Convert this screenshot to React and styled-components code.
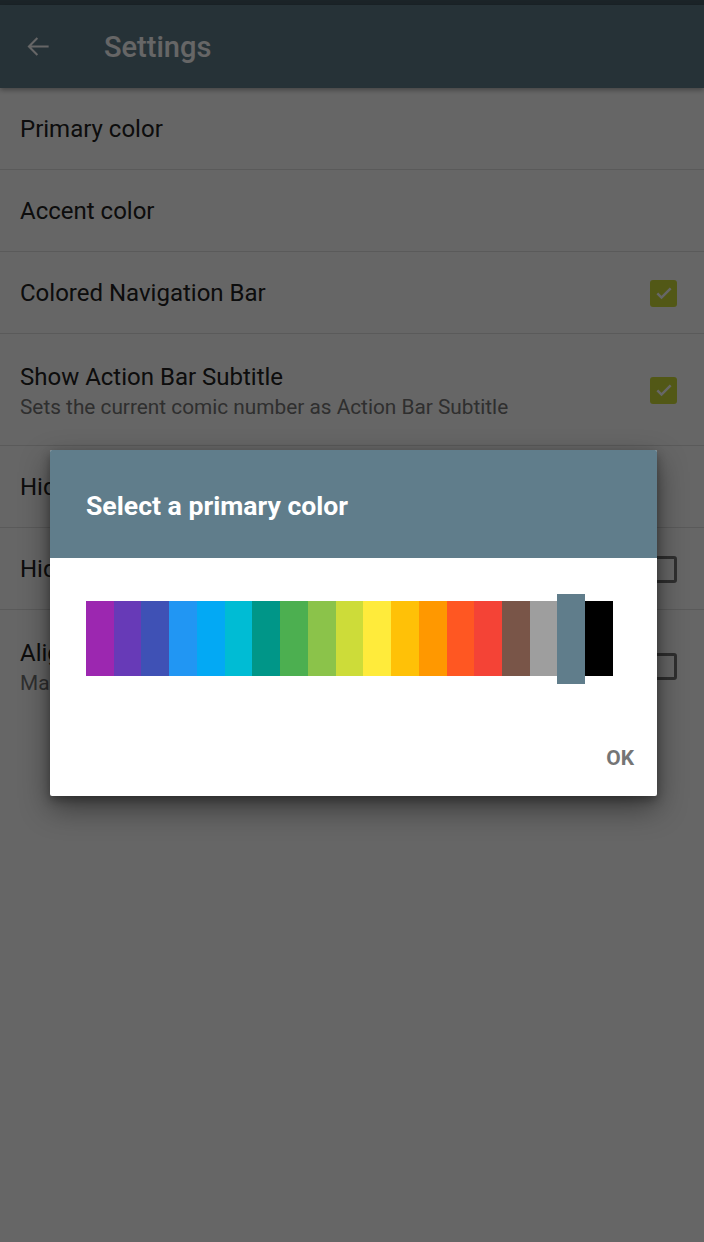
import React from 'react';
import styled, { createGlobalStyle } from 'styled-components';

const GlobalStyle = createGlobalStyle`
  html, body {
    margin: 0;
    padding: 0;
    background: #fff;
  }
  body {
    font-family: Roboto, "Noto Sans", "Liberation Sans", sans-serif;
  }
`;

const Screen = styled.div`
  background: #fff;
  height: 1242px;
  overflow: hidden;
  position: relative;
  width: 704px;
`;

const StatusBar = styled.div`
  background: #455a64;
  height: 5px;
`;

const AppBar = styled.header`
  align-items: center;
  background: #607d8b;
  box-shadow: 0 2px 5px rgba(0, 0, 0, 0.35);
  display: flex;
  height: 83px;
  padding-left: 25px;
  position: relative;
  z-index: 1;
`;

const BackIcon = styled.svg`
  fill: none;
  height: 27px;
  stroke: #fff;
  stroke-width: 1.8;
  width: 27px;
`;

const AppTitle = styled.h1`
  color: #fff;
  font-size: 29px;
  font-weight: 500;
  margin: 0 0 0 52px;
`;

const List = styled.div`
  display: flex;
  flex-direction: column;
`;

const Row = styled.div`
  align-items: center;
  border-bottom: ${({ $last }) => ($last ? 'none' : '1px solid #e0e0e0')};
  box-sizing: border-box;
  display: flex;
  height: ${({ $tall }) => ($tall ? '112px' : '82px')};
  justify-content: space-between;
  padding: 1px 27px 0 20px;
`;

const TextBlock = styled.div`
  display: flex;
  flex-direction: column;
  gap: 3px;
`;

const Label = styled.div`
  color: #212121;
  font-size: 24px;
  line-height: 30px;
`;

const Summary = styled.div`
  color: #757575;
  font-size: 20.8px;
  line-height: 24px;
`;

const Box = styled.div`
  align-items: center;
  background: ${({ $checked }) => ($checked ? '#cddc39' : 'transparent')};
  border: ${({ $checked }) => ($checked ? 'none' : '3px solid #757575')};
  border-radius: 3px;
  box-sizing: border-box;
  display: flex;
  height: 27px;
  justify-content: center;
  width: 27px;
`;

const Scrim = styled.div`
  background: rgba(0, 0, 0, 0.6);
  inset: 0;
  position: absolute;
  z-index: 2;
`;

const Dialog = styled.div`
  background: #fff;
  border-radius: 2px;
  box-shadow: 0 12px 30px rgba(0, 0, 0, 0.45), 0 4px 10px rgba(0, 0, 0, 0.3);
  left: 50px;
  overflow: hidden;
  position: absolute;
  top: 450px;
  width: 607px;
  z-index: 3;
`;

const DialogHeader = styled.div`
  align-items: center;
  background: #607d8b;
  display: flex;
  height: 108px;
  padding: 2px 0 0 36px;
  box-sizing: border-box;
`;

const DialogTitle = styled.h2`
  color: #fff;
  font-size: 26.6px;
  font-weight: 700;
  margin: 0;
`;

const Swatches = styled.div`
  align-items: center;
  display: flex;
  height: 75px;
  margin: 43px 44px 0 36px;
`;

const Swatch = styled.div`
  background: ${({ $color }) => $color};
  flex: 1;
  height: ${({ $selected }) => ($selected ? '90px' : '75px')};
`;

const Actions = styled.div`
  align-items: flex-end;
  box-sizing: border-box;
  display: flex;
  height: 120px;
  justify-content: flex-end;
  padding: 0 23px 26px 0;
`;

const OkButton = styled.button`
  background: none;
  border: none;
  color: #757575;
  cursor: pointer;
  font-family: inherit;
  font-size: 21px;
  font-weight: 700;
  line-height: 24px;
  padding: 0;
`;

const colors = [
  '#9c27b0', '#673ab7', '#3f51b5', '#2196f3', '#03a9f4', '#00bcd4',
  '#009688', '#4caf50', '#8bc34a', '#cddc39', '#ffeb3b', '#ffc107',
  '#ff9800', '#ff5722', '#f44336', '#795548', '#9e9e9e', '#607d8b',
  '#000000',
];

const settings = [
  { title: 'Primary color' },
  { title: 'Accent color' },
  { title: 'Colored Navigation Bar', checked: true },
  { title: 'Show Action Bar Subtitle', summary: 'Sets the current comic number as Action Bar Subtitle', checked: true },
  { title: 'Hide Donate Button' },
  { title: 'Hide FAB', checked: false },
  { title: 'Align Title', summary: 'Makes the comic title left aligned', checked: false, last: true },
];

function Checkbox({ checked }) {
  return (
    <Box $checked={checked}>
      {checked && (
        <svg width="20" height="20" viewBox="0 0 24 24">
          <path d="M4 12.5l5 5L20 6.5" fill="none" stroke="#fff" strokeWidth="3" />
        </svg>
      )}
    </Box>
  );
}

export default function App() {
  return (
    <Screen>
      <GlobalStyle />
      <StatusBar />
      <AppBar>
        <BackIcon viewBox="0 0 24 24">
          <path d="M21 12H3.5M11 4.5L3.5 12l7.5 7.5" />
        </BackIcon>
        <AppTitle>Settings</AppTitle>
      </AppBar>
      <List>
        {settings.map(item => (
          <Row key={item.title} $tall={!!item.summary} $last={item.last}>
            <TextBlock>
              <Label>{item.title}</Label>
              {item.summary && <Summary>{item.summary}</Summary>}
            </TextBlock>
            {item.checked !== undefined && <Checkbox checked={item.checked} />}
          </Row>
        ))}
      </List>
      <Scrim />
      <Dialog>
        <DialogHeader>
          <DialogTitle>Select a primary color</DialogTitle>
        </DialogHeader>
        <Swatches>
          {colors.map(color => (
            <Swatch key={color} $color={color} $selected={color === '#607d8b'} />
          ))}
        </Swatches>
        <Actions>
          <OkButton>OK</OkButton>
        </Actions>
      </Dialog>
    </Screen>
  );
}
